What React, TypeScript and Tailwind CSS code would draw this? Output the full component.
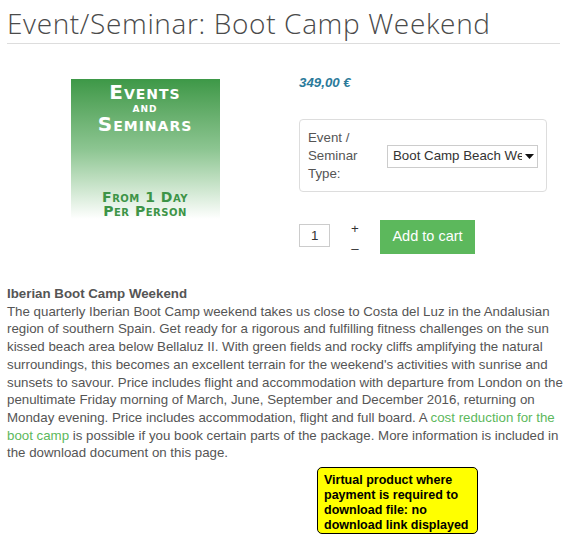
import React from 'react';

const ProductImage: React.FC = () => (
  <div className="w-[149px] h-[140px] bg-gradient-to-b from-[#3d9847] via-[#8cc591] to-white flex flex-col items-center pt-[3px] [font-family:'DejaVu_Sans',sans-serif] font-bold [font-variant:small-caps]">
    <div className="text-white text-[20px] leading-[20px] tracking-[1px]">Events</div>
    <div className="text-white text-[13px] leading-[11px] tracking-[1px]">and</div>
    <div className="text-white text-[20px] leading-[22px] tracking-[1px]">Seminars</div>
    <div className="mt-auto mb-[1px] text-[#3d9447] text-[14px] leading-[14px] text-center tracking-[0.5px]">
      From 1 Day
      <br />
      Per Person
    </div>
  </div>
);

export default function App() {
  return (
    <div className="w-[573px] h-[557px] bg-white px-[7px] pt-[6px] [font-family:'Liberation_Sans',Arial,sans-serif] text-[#555]">
      <h1 className="[font-family:'Open_Sans',sans-serif] font-light text-[28px] leading-[34px] text-[#4a4a4a] tracking-[0.65px] pb-[3px] border-b border-[#ddd] w-[553px]">
        Event/Seminar: Boot Camp Weekend
      </h1>

      <div className="flex mt-[35px]">
        <div className="w-[292px] flex justify-center pr-[16px]">
          <ProductImage />
        </div>
        <div className="flex-1">
          <div className="text-[13.3px] italic font-bold text-[#2a7a9a] leading-[16px] -mt-[4px]">349,00 €</div>
          <div className="mt-[28px] w-[248px] h-[73px] border border-[#ddd] rounded-[4px] flex items-center pl-[8px] pr-[8px]">
            <div className="w-[80px] text-[13.3px] leading-[18px]">
              Event /
              <br />
              Seminar
              <br />
              Type:
            </div>
            <div className="w-[151px] h-[23px] border border-[#ccc] flex items-center pl-[5px] pr-[3px] text-[13.3px] text-[#333] mt-[1px]">
              <span className="flex-1 whitespace-nowrap overflow-hidden">Boot Camp Beach Weekend</span>
              <svg width="9" height="5" viewBox="0 0 9 5" className="ml-[3px] shrink-0">
                <path d="M0 0h9L4.5 5z" fill="#111" />
              </svg>
            </div>
          </div>
          <div className="flex items-start mt-[28px]">
            <div className="mt-[4px] w-[31px] h-[23px] border border-[#ccc] text-[13.3px] text-[#333] pl-[11px] leading-[21px]">1</div>
            <div className="w-[50px] flex flex-col items-center text-[13.3px] text-[#333] leading-[20px] mt-[-1px]">
              <span>+</span>
              <span>–</span>
            </div>
            <button className="w-[95px] h-[34px] bg-[#5cb85c] text-white text-[14.5px]">Add to cart</button>
          </div>
        </div>
      </div>

      <div className="mt-[26px] text-[13.3px] leading-[17.7px] w-[560px]">
        <div className="font-bold">Iberian Boot Camp Weekend</div>
        <p>
          The quarterly Iberian Boot Camp weekend takes us close to Costa del Luz in the Andalusian region of southern
          Spain. Get ready for a rigorous and fulfilling fitness challenges on the sun kissed beach area below Bellaluz
          II. With green fields and rocky cliffs amplifying the natural surroundings, this becomes an excellent terrain
          for the weekend's activities with sunrise and sunsets to savour. Price includes flight and accommodation with
          departure from London on the penultimate Friday morning of March, June, September and December 2016, returning
          on Monday evening. Price includes accommodation, flight and full board. A{' '}
          <span className="text-[#5cb85c]">cost reduction for the boot camp</span> is possible if you book certain parts
          of the package. More information is included in the download document on this page.
        </p>
      </div>

      <div className="ml-[310px] mt-[5px] w-[161px] h-[67px] bg-[#ffff00] border border-black rounded-[5px] pl-[6px] pt-[5px] text-black font-bold text-[12.5px] leading-[15px]">
        Virtual product where payment is required to download file: no download link displayed
      </div>
    </div>
  );
}
